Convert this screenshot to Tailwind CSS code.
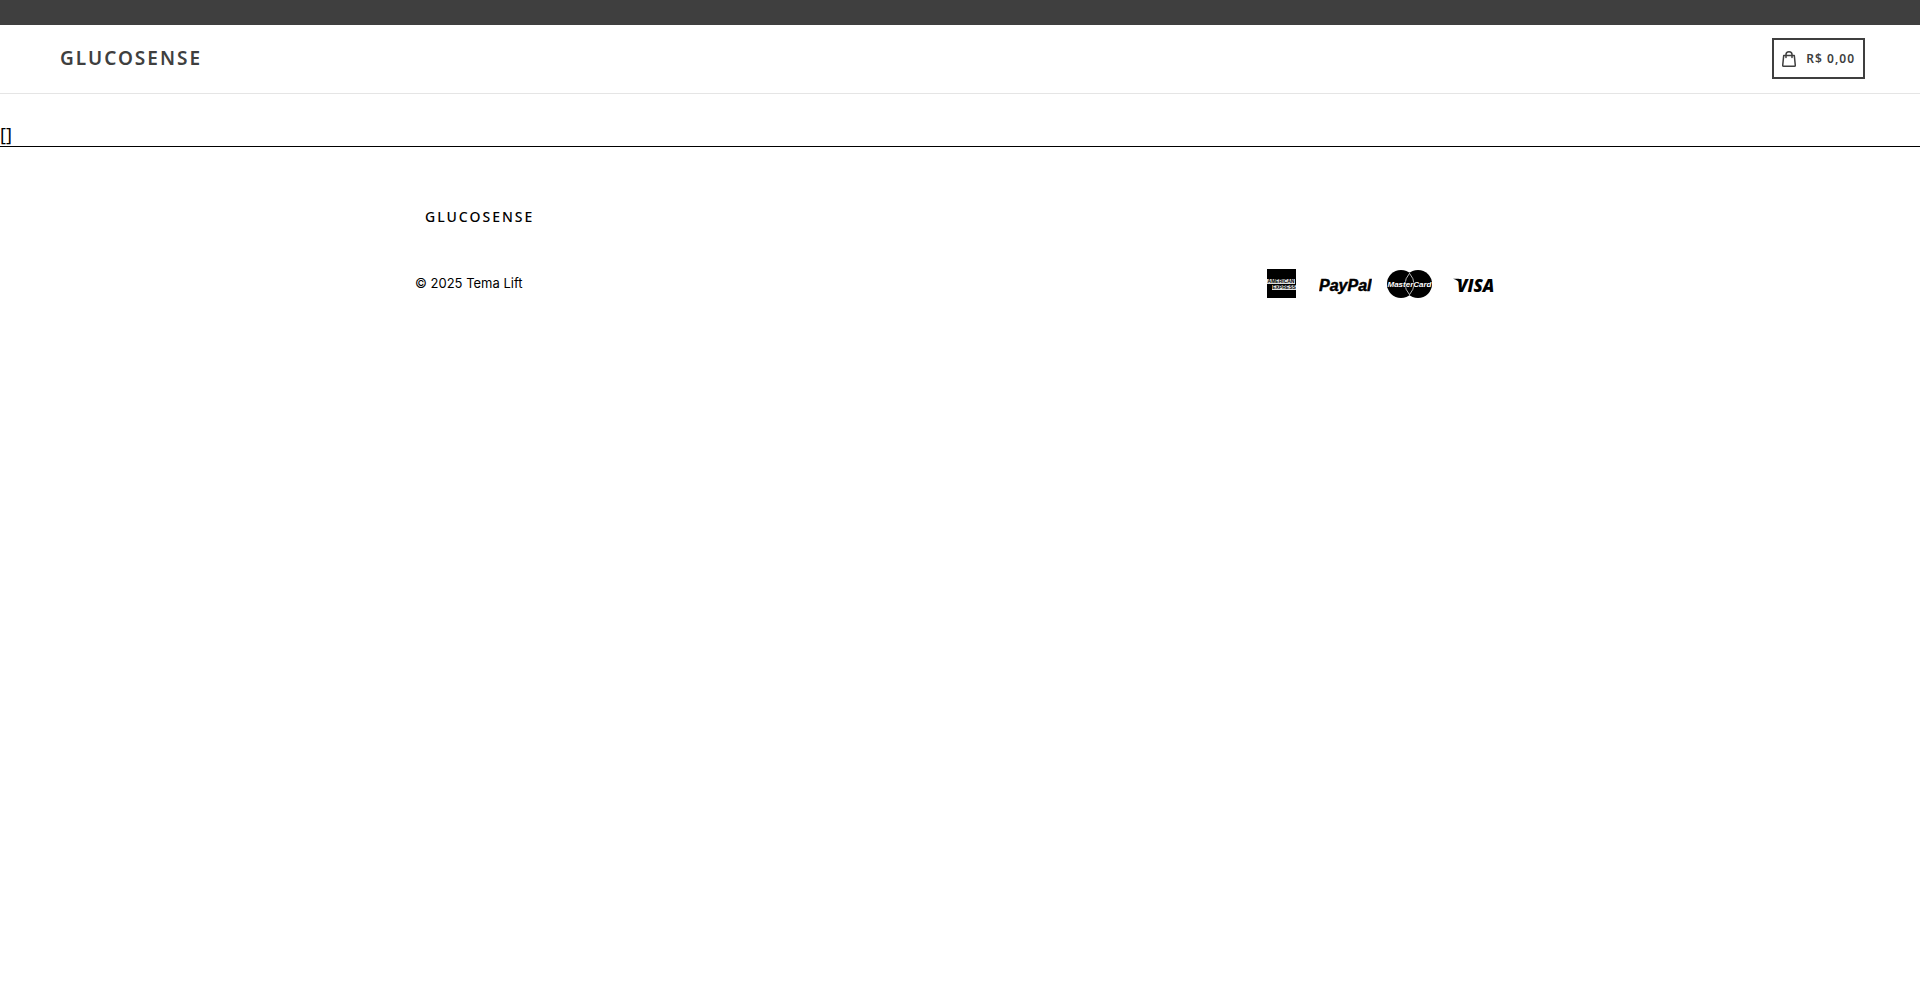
<!DOCTYPE html>
<html lang="pt-BR">
<head>
    <meta charset="UTF-8">
    <meta name="viewport" content="width=device-width, initial-scale=1.0">
    <title>GLUCOSENSE</title>
    <script src="https://cdn.jsdelivr.net/npm/@tailwindcss/browser@4"></script>
</head>
<body class="bg-white text-black font-['Noto_Sans',sans-serif]">
    <!-- Announcement bar -->
    <div class="h-[25px] bg-[#3f3f3f]"></div>

    <!-- Header -->
    <header class="flex items-center justify-between pt-[13px] pb-[14px] pl-15 pr-[55px] border-b border-[#e5e5e5] text-[#3f3f3f]">
        <a href="#" class="text-[19px] font-semibold tracking-[2px]">GLUCOSENSE</a>
        <button class="flex items-center gap-[10px] h-[41px] px-2 border-2 border-[#3f3f3f] text-xs font-semibold tracking-[1px]">
            <svg class="w-[14px] h-[16px]" viewBox="0 0 14 16" fill="none" stroke="currentColor" stroke-width="1.5" stroke-linejoin="round" stroke-linecap="round">
                <path d="M1.7 4.5h10.6l1 9.9q0 .8-.8.8h-11q-.8 0-.8-.8z"/>
                <path d="M4 6.5V3.6q0-2.8 3-2.8t3 2.8v2.9"/>
            </svg>
            <span>R$ 0,00</span>
        </button>
    </header>

    <!-- Content -->
    <main class="pt-7 border-b border-black">
        <p class="text-lg leading-6">[]</p>
    </main>

    <!-- Footer -->
    <footer class="max-w-[1090px] mx-auto pt-15">
        <a href="#" class="block pl-[10px] text-sm leading-5 font-medium tracking-[2px]">GLUCOSENSE</a>
        <div class="flex items-center justify-between pt-[42px] pr-[10px]">
            <p class="font-['Inter',sans-serif] text-[13px]">&copy; 2025 Tema Lift</p>
            <ul class="flex items-center">
                <li class="mr-[23px]">
                    <svg class="w-[29px] h-[29px]" viewBox="0 0 29 29" role="img" aria-label="American Express">
                        <path d="M0 0h29v29H0z"/>
                        <path fill="#ddd" d="M0 10h28v5H0zM5 16h24v5H5z"/>
                        <text x="14" y="14.4" text-anchor="middle" font-family="Liberation Sans" font-size="5" font-weight="700">AMERICAN</text>
                        <text x="17" y="20.4" text-anchor="middle" font-family="Liberation Sans" font-size="5" font-weight="700">EXPRESS</text>
                    </svg>
                </li>
                <li class="mr-[15px]">
                    <svg class="w-[53px] h-[29px]" viewBox="0 0 53 29" role="img" aria-label="PayPal">
                        <text x="0" y="22" font-family="Liberation Sans" font-size="16" font-weight="700" font-style="italic" stroke="#000" stroke-width=".5">PayPal</text>
                    </svg>
                </li>
                <li class="mr-[21px]">
                    <svg class="w-[45px] h-[29px]" viewBox="0 0 45 29" role="img" aria-label="MasterCard">
                        <circle cx="14" cy="15" r="14"/>
                        <circle cx="31" cy="15" r="14"/>
                        <path d="M22.5 4.3q-9 10.7 0 21.4q9-10.7 0-21.4" fill="none" stroke="#fff" stroke-width=".7"/>
                        <text x="22.5" y="18" text-anchor="middle" fill="#fff" stroke="#000" stroke-width="1" paint-order="stroke" font-family="Liberation Sans" font-size="8" font-weight="700" font-style="italic">MasterCard</text>
                    </svg>
                </li>
                <li>
                    <svg class="w-[42px] h-[29px]" viewBox="0 0 42 29" role="img" aria-label="Visa">
                        <path d="M0 9.7h5.5q1.4 0 1.8 1.2l1 5.2Q6 11.5 0 9.7z"/>
                        <text x="4" y="22.5" font-family="Open Sans" font-size="17" font-weight="800" font-style="italic">VISA</text>
                    </svg>
                </li>
            </ul>
        </div>
    </footer>
</body>
</html>
